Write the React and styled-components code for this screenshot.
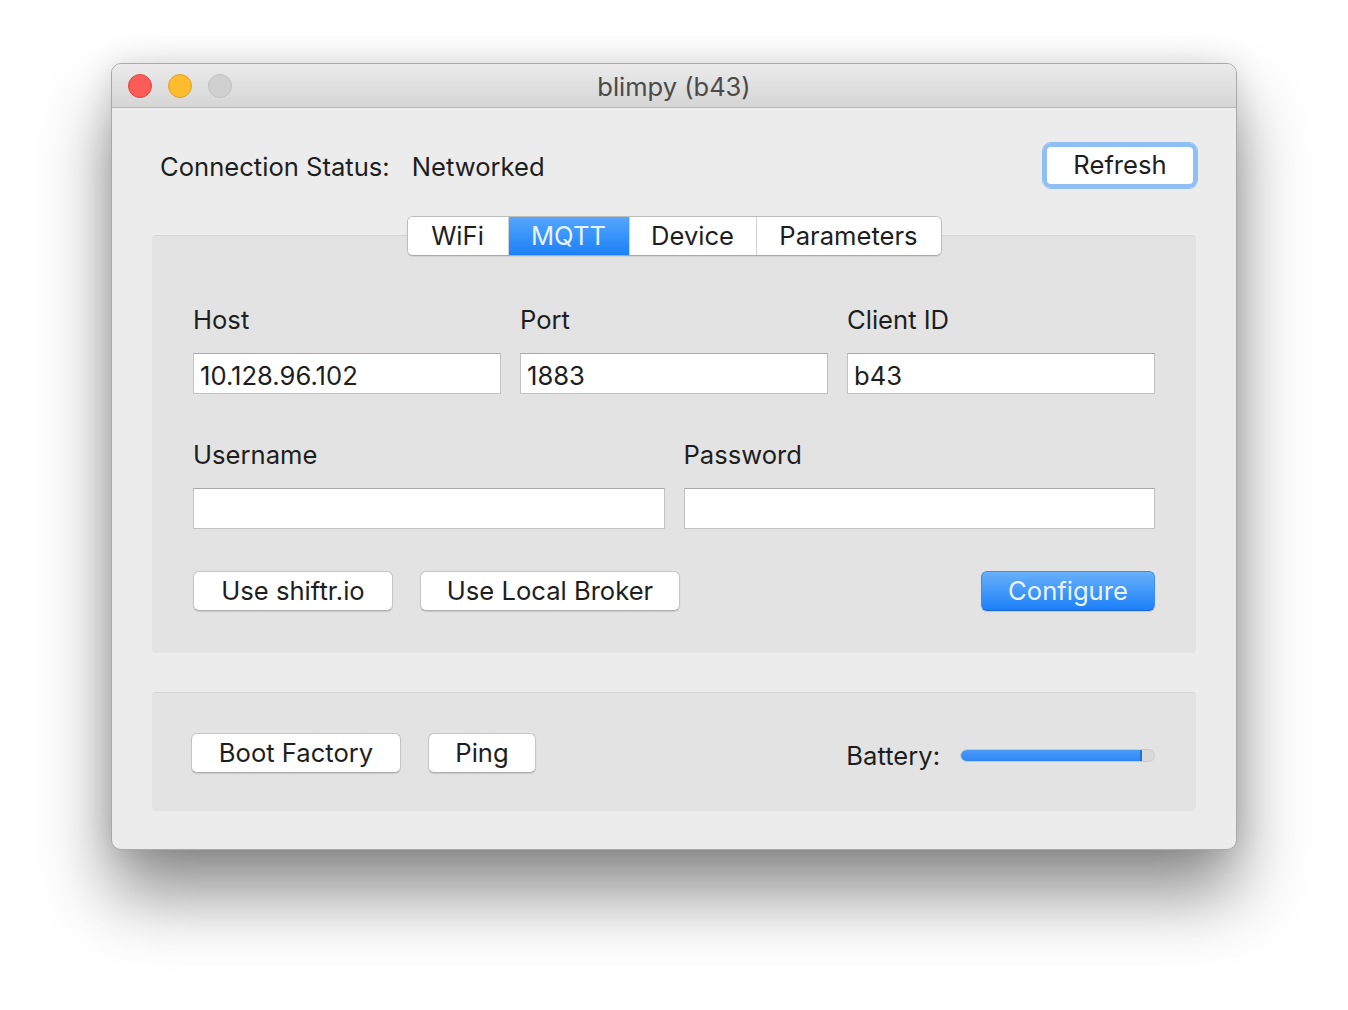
import React from 'react';
import styled, { createGlobalStyle } from 'styled-components';

const GlobalStyle = createGlobalStyle`
  html, body {
    margin: 0;
    padding: 0;
    background: #ffffff;
  }
  body {
    font-family: Inter, "Noto Sans", sans-serif;
    color: #1e1e1e;
    -webkit-font-smoothing: antialiased;
  }
`;

const Page = styled.div`
  width: 1348px;
  height: 1010px;
  padding: 63px 0 0 111px;
  box-sizing: border-box;
  overflow: hidden;
`;

const Window = styled.div`
  width: 1126px;
  box-sizing: border-box;
  background: #ececec;
  border: 1px solid #a9a9a9;
  border-radius: 10px;
  overflow: hidden;
  box-shadow: 0 44px 70px rgba(0, 0, 0, 0.45), 0 0 30px rgba(0, 0, 0, 0.12);
`;

const TitleBar = styled.div`
  position: relative;
  height: 43px;
  display: flex;
  align-items: center;
  justify-content: center;
  background: linear-gradient(#ebebeb, #d5d5d5);
  border-bottom: 1px solid #b4b4b4;
`;

const Lights = styled.div`
  position: absolute;
  left: 16px;
  top: 10px;
  display: flex;
  gap: 16px;
`;

const Light = styled.span`
  width: 24px;
  height: 24px;
  border-radius: 50%;
  box-sizing: border-box;
  background: ${(p) => p.$color};
  border: 1px solid ${(p) => p.$edge};
`;

const Title = styled.div`
  font-size: 25.5px;
  color: #4a4a4a;
  padding-top: 2px;
`;

const Body = styled.div`
  padding: 34px 40px 38px 40px;
`;

const StatusRow = styled.div`
  display: flex;
  align-items: center;
  justify-content: space-between;
  height: 47px;
  padding-left: 8px;
  margin-right: -2px;
`;

const StatusText = styled.div`
  display: flex;
  gap: 22px;
  font-size: 25.6px;
  padding-top: 2px;
`;

const FocusButton = styled.button`
  font-family: inherit;
  font-size: 25.6px;
  color: #1e1e1e;
  width: 156px;
  height: 47px;
  border-radius: 9px;
  background: #ffffff;
  border: 1px solid #8fbdf0;
  box-shadow: inset 0 0 0 4px #8fc0f5;
  padding: 0 0 3px 0;
`;

const TabArea = styled.div`
  margin-top: 27px;
  display: flex;
  flex-direction: column;
`;

const TabBar = styled.div`
  position: relative;
  z-index: 1;
  align-self: center;
  display: flex;
  margin-bottom: -21px;
  background: #ffffff;
  border: 1px solid #bdbdbd;
  border-bottom-color: #a9a9a9;
  border-radius: 6px;
  overflow: hidden;
  box-shadow: 0 1px 1px rgba(0, 0, 0, 0.08);
`;

const Tab = styled.div`
  width: ${(p) => p.$w}px;
  height: 38px;
  box-sizing: border-box;
  display: flex;
  align-items: center;
  justify-content: center;
  font-size: 25.6px;
  padding-bottom: 2px;
  color: ${(p) => (p.$active ? '#e9f4ff' : '#1e1e1e')};
  background: ${(p) => (p.$active ? 'linear-gradient(#55a6fc, #1c80f7)' : '#ffffff')};
  border-left: ${(p) => (p.$first ? 'none' : '1px solid #d2d2d2')};
`;

const GroupBox = styled.div`
  background: #e3e3e3;
  border-top: 1px solid #d6d6d6;
  border-radius: 4px;
  padding: ${(p) => p.$pad};
  margin-top: ${(p) => p.$mt || 0}px;
`;

const FieldGrid = styled.div`
  display: grid;
  grid-template-columns: repeat(${(p) => p.$cols}, 1fr);
  column-gap: 19px;
  margin-bottom: ${(p) => p.$mb}px;
`;

const Field = styled.div`
  display: flex;
  flex-direction: column;
`;

const Label = styled.div`
  font-size: 25.6px;
  height: 32px;
  line-height: 32px;
  margin-bottom: 17px;
`;

const Input = styled.div`
  height: 41px;
  box-sizing: border-box;
  background: #ffffff;
  border: 1px solid #c2c2c2;
  border-top-color: #a8a8a8;
  font-size: 25.6px;
  line-height: 39px;
  padding: 2px 0 0 6px;
`;

const ButtonRow = styled.div`
  display: flex;
  align-items: center;
  gap: ${(p) => p.$gap}px;
`;

const Button = styled.button`
  font-family: inherit;
  font-size: 25.6px;
  color: #1e1e1e;
  height: 40px;
  width: ${(p) => p.$w}px;
  padding: 0 0 2px 0;
  background: #ffffff;
  border: 1px solid #c6c6c6;
  border-bottom-color: #b0b0b0;
  border-radius: 6px;
  box-shadow: 0 1px 1px rgba(0, 0, 0, 0.12);
`;

const PrimaryButton = styled(Button)`
  color: #eaf4ff;
  background: linear-gradient(#68b0fb, #1b80f8);
  border: 1px solid #3d8ef0;
  border-bottom-color: #1767d4;
`;

const Spacer = styled.div`
  flex: 1;
`;

const Battery = styled.div`
  display: flex;
  align-items: center;
  gap: 20px;
`;

const BatteryLabel = styled.div`
  font-size: 25.6px;
  padding-top: 4px;
`;

const Track = styled.div`
  width: 195px;
  height: 13px;
  box-sizing: border-box;
  border-radius: 7px;
  background: #d9d9d9;
  border: 1px solid #cacaca;
  overflow: hidden;
  margin-top: 4px;
`;

const Fill = styled.div`
  height: 100%;
  background: linear-gradient(#4a9bf8, #2f86f4);
  border-right: 2px solid #2a6fd0;
  border-radius: 6px 0 0 6px;
`;

const tabs = [
  { name: 'WiFi', w: 100 },
  { name: 'MQTT', w: 121, active: true },
  { name: 'Device', w: 127 },
  { name: 'Parameters', w: 185 },
];

export default function App() {
  const battery = 93;
  return (
    <Page>
      <GlobalStyle />
      <Window>
        <TitleBar>
          <Lights>
            <Light $color="#fc5b57" $edge="#de4541" />
            <Light $color="#fdbc2e" $edge="#dea02a" />
            <Light $color="#d0d0d0" $edge="#c0c0c0" />
          </Lights>
          <Title>blimpy (b43)</Title>
        </TitleBar>
        <Body>
          <StatusRow>
            <StatusText>
              <span>Connection Status:</span>
              <span>Networked</span>
            </StatusText>
            <FocusButton>Refresh</FocusButton>
          </StatusRow>

          <TabArea>
            <TabBar>
              {tabs.map((t, i) => (
                <Tab key={t.name} $w={t.w} $active={t.active} $first={i === 0}>
                  {t.name}
                </Tab>
              ))}
            </TabBar>
            <GroupBox $pad="68px 41px 42px 41px">
              <FieldGrid $cols={3} $mb={45}>
                <Field>
                  <Label>Host</Label>
                  <Input>10.128.96.102</Input>
                </Field>
                <Field>
                  <Label>Port</Label>
                  <Input>1883</Input>
                </Field>
                <Field>
                  <Label>Client ID</Label>
                  <Input>b43</Input>
                </Field>
              </FieldGrid>
              <FieldGrid $cols={2} $mb={42}>
                <Field>
                  <Label>Username</Label>
                  <Input />
                </Field>
                <Field>
                  <Label>Password</Label>
                  <Input />
                </Field>
              </FieldGrid>
              <ButtonRow $gap={27}>
                <Button $w={200}>Use shiftr.io</Button>
                <Button $w={260}>Use Local Broker</Button>
                <Spacer />
                <PrimaryButton $w={174}>Configure</PrimaryButton>
              </ButtonRow>
            </GroupBox>
          </TabArea>

          <GroupBox $pad="40px 41px 38px 39px" $mt={39}>
            <ButtonRow $gap={27}>
              <Button $w={210}>Boot Factory</Button>
              <Button $w={108}>Ping</Button>
              <Spacer />
              <Battery>
                <BatteryLabel>Battery:</BatteryLabel>
                <Track>
                  <Fill style={{ width: `${battery}%` }} />
                </Track>
              </Battery>
            </ButtonRow>
          </GroupBox>
        </Body>
      </Window>
    </Page>
  );
}
